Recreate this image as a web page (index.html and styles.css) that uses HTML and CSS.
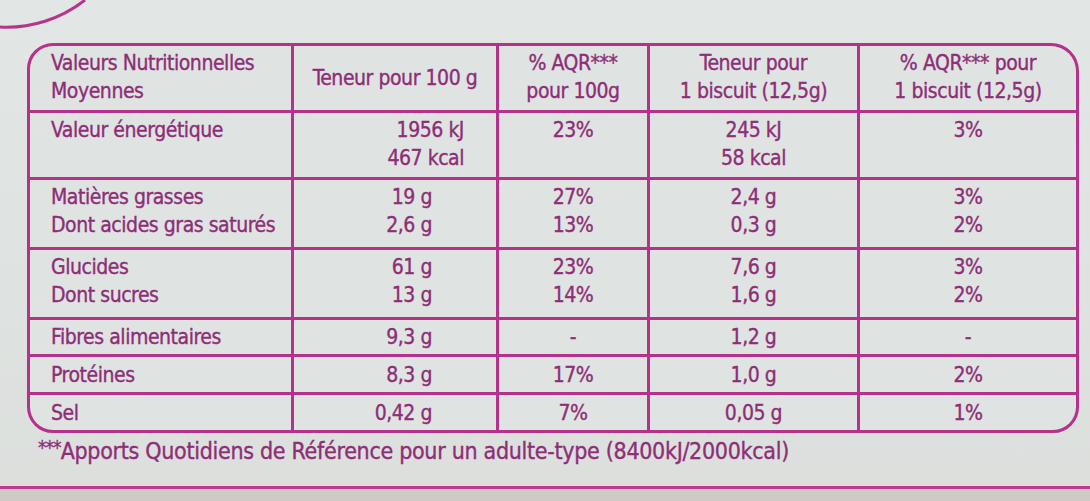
FILE: index.html
```html
<!DOCTYPE html>
<html lang="fr">
<head>
<meta charset="utf-8">
<title>Valeurs Nutritionnelles</title>
<link rel="stylesheet" href="styles.css">
</head>
<body>
<svg class="arc" width="100" height="40" viewBox="0 0 100 40" aria-hidden="true">
  <path d="M0 27 A127 127 0 0 0 85 0" fill="none" stroke="#b8348a" stroke-width="3"/>
</svg>
<main class="label">
  <div class="table">
    <div class="cell head first two">Valeurs Nutritionnelles<br>Moyennes</div>
    <div class="cell head c">Teneur pour 100 g</div>
    <div class="cell head c two">% AQR***<br>pour 100g</div>
    <div class="cell head c two">Teneur pour<br>1 biscuit (12,5g)</div>
    <div class="cell head c two">% AQR*** pour<br>1 biscuit (12,5g)</div>

    <div class="cell first top">Valeur énergétique</div>
    <div class="cell r top energy">1956 kJ<br>467 kcal</div>
    <div class="cell c top">23%</div>
    <div class="cell c top">245 kJ<br>58 kcal</div>
    <div class="cell c top">3%</div>

    <div class="cell first top">Matières grasses<br>Dont acides gras saturés</div>
    <div class="cell r top">19 g<br>2,6 g</div>
    <div class="cell c top">27%<br>13%</div>
    <div class="cell c top">2,4 g<br>0,3 g</div>
    <div class="cell c top">3%<br>2%</div>

    <div class="cell first top">Glucides<br>Dont sucres</div>
    <div class="cell r top">61 g<br>13 g</div>
    <div class="cell c top">23%<br>14%</div>
    <div class="cell c top">7,6 g<br>1,6 g</div>
    <div class="cell c top">3%<br>2%</div>

    <div class="cell first">Fibres alimentaires</div>
    <div class="cell r">9,3 g</div>
    <div class="cell c">-</div>
    <div class="cell c">1,2 g</div>
    <div class="cell c">-</div>

    <div class="cell first">Protéines</div>
    <div class="cell r">8,3 g</div>
    <div class="cell c">17%</div>
    <div class="cell c">1,0 g</div>
    <div class="cell c">2%</div>

    <div class="cell first">Sel</div>
    <div class="cell r">0,42 g</div>
    <div class="cell c">7%</div>
    <div class="cell c">0,05 g</div>
    <div class="cell c">1%</div>
  </div>
  <p class="note"><span class="stars">***</span>Apports Quotidiens de Référence pour un adulte-type (8400kJ/2000kcal)</p>
</main>
<div class="edge"></div>
</body>
</html>
```
FILE: styles.css
```css
html, body {
  margin: 0;
  padding: 0;
}
body {
  width: 1090px;
  height: 501px;
  overflow: hidden;
  position: relative;
  background: linear-gradient(180deg, #e2e6e4 0%, #dee2e0 60%, #dcdfdc 100%);
  font-family: "DejaVu Sans Condensed", "Liberation Sans", sans-serif;
  color: #8d2e77;
  -webkit-text-stroke: 0.35px #8d2e77;
}
.arc {
  position: absolute;
  left: 0;
  top: 0;
}
.label {
  padding: 43px 11px 0 27px;
}
.table {
  display: grid;
  grid-template-columns: 261px 202px 148px 207px 216px;
  grid-template-rows: 64px 64px 67px 67px 34px 35px 35px;
  gap: 3px;
  background: #b5318a;
  border: 3px solid #b5318a;
  border-radius: 26px 28px 26px 26px;
  overflow: hidden;
  font-size: 21px;
  line-height: 28px;
  letter-spacing: -0.45px;
}
.cell {
  background: #dfe3e1;
  display: flex;
  flex-direction: column;
  justify-content: center;
}
.cell.top {
  justify-content: flex-start;
  padding-top: 3px;
}
.cell.head.two {
  justify-content: flex-start;
  padding-top: 3px;
}
.first {
  padding-left: 21px;
  text-align: left;
}
.c {
  text-align: center;
}
.r {
  text-align: right;
  padding-right: 64px;
}
.r.energy {
  padding-right: 32px;
}
.note {
  margin: 0;
  padding-left: 11px;
  font-size: 23px;
  line-height: 28px;
  letter-spacing: -0.3px;
}
.stars {
  font-size: 19px;
  vertical-align: 5px;
  letter-spacing: -1px;
}
.edge {
  position: absolute;
  left: 0;
  right: 0;
  bottom: 0;
  height: 12px;
  border-top: 3px solid #c0398f;
  background: #cfcac6;
}
```
